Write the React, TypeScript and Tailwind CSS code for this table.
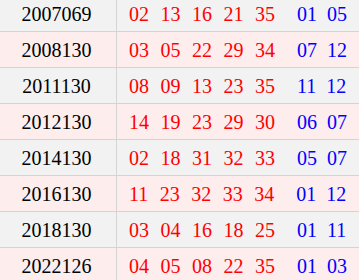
import { type FC } from 'react';

interface Draw {
  issue: string;
  reds: string[];
  blues: string[];
}

const draws: Draw[] = [
  { issue: '2007069', reds: ['02', '13', '16', '21', '35'], blues: ['01', '05'] },
  { issue: '2008130', reds: ['03', '05', '22', '29', '34'], blues: ['07', '12'] },
  { issue: '2011130', reds: ['08', '09', '13', '23', '35'], blues: ['11', '12'] },
  { issue: '2012130', reds: ['14', '19', '23', '29', '30'], blues: ['06', '07'] },
  { issue: '2014130', reds: ['02', '18', '31', '32', '33'], blues: ['05', '07'] },
  { issue: '2016130', reds: ['11', '23', '32', '33', '34'], blues: ['01', '12'] },
  { issue: '2018130', reds: ['03', '04', '16', '18', '25'], blues: ['01', '11'] },
  { issue: '2022126', reds: ['04', '05', '08', '22', '35'], blues: ['01', '03'] },
];

const App: FC = () => {
  return (
    <div className="h-[280px] w-[359px] overflow-hidden bg-white font-['Liberation_Serif',serif] text-[20px]">
      <div className="-mt-[4px]">
        {draws.map((d, i) => (
          <div
            key={d.issue}
            className={`flex h-[36px] border-b border-[#d4d4d4] ${
              i % 2 === 0 ? 'bg-[#f2f2f2]' : 'bg-[#fdeded]'
            }`}
          >
            <div className="flex w-[117px] items-center justify-center border-r border-[#d4d4d4] pr-[3px] text-black">
              {d.issue}
            </div>
            <div className="flex flex-1 items-center pl-[12px]">
              <div className="flex gap-[11.5px] text-[#ff0000]">
                {d.reds.map((n, j) => (
                  <span key={j}>{n}</span>
                ))}
              </div>
              <div className="ml-[22px] flex gap-[10px] text-[#0000ff]">
                {d.blues.map((n, j) => (
                  <span key={j}>{n}</span>
                ))}
              </div>
            </div>
          </div>
        ))}
      </div>
    </div>
  );
};

export default App;
